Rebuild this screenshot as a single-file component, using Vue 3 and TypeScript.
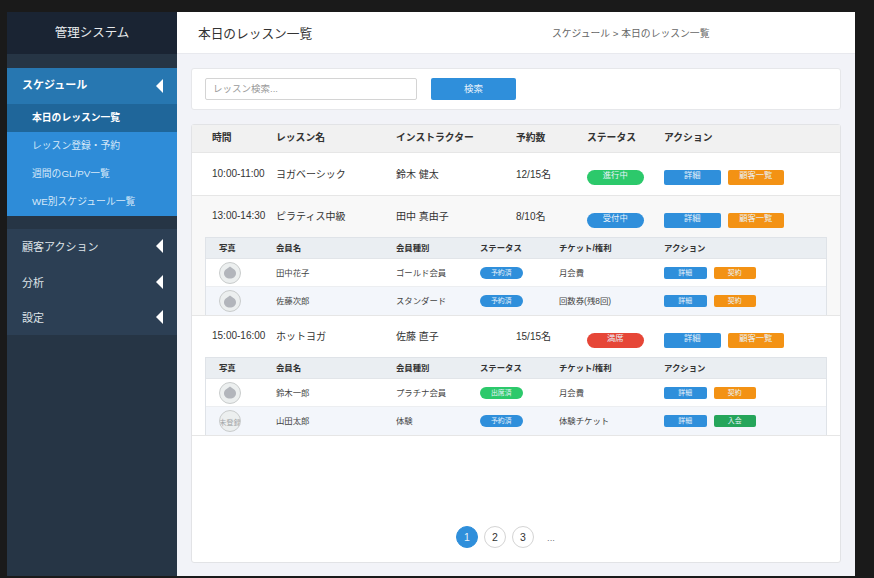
<script setup lang="ts">
interface Member {
  photo?: string;
  name: string;
  kind: string;
  status: string;
  statusType: string;
  ticket: string;
  action: string;
  actionType: string;
}

interface Lesson {
  time: string;
  name: string;
  teacher: string;
  booked: string;
  status: string;
  statusType: string;
  members: Member[];
}

const lessons: Lesson[] = [
  { time: '10:00-11:00', name: 'ヨガベーシック', teacher: '鈴木 健太', booked: '12/15名', status: '進行中', statusType: 'green', members: [] },
  {
    time: '13:00-14:30', name: 'ピラティス中級', teacher: '田中 真由子', booked: '8/10名', status: '受付中', statusType: 'blue',
    members: [
      { name: '田中花子', kind: 'ゴールド会員', status: '予約済', statusType: 'blue', ticket: '月会費', action: '契約', actionType: 'orange' },
      { name: '佐藤次郎', kind: 'スタンダード', status: '予約済', statusType: 'blue', ticket: '回数券(残8回)', action: '契約', actionType: 'orange' }
    ]
  },
  {
    time: '15:00-16:00', name: 'ホットヨガ', teacher: '佐藤 直子', booked: '15/15名', status: '満席', statusType: 'red',
    members: [
      { name: '鈴木一郎', kind: 'プラチナ会員', status: '出席済', statusType: 'green', ticket: '月会費', action: '契約', actionType: 'orange' },
      { photo: '未登録', name: '山田太郎', kind: '体験', status: '予約済', statusType: 'blue', ticket: '体験チケット', action: '入会', actionType: 'dark-green' }
    ]
  }
];

const subMenu = ['本日のレッスン一覧', 'レッスン登録・予約', '週間のGL/PV一覧', 'WE別スケジュール一覧'];
const otherMenu = ['顧客アクション', '分析', '設定'];
</script>

<template>
  <div class="frame">
    <aside class="sidebar">
      <div class="brand">管理システム</div>
      <nav class="nav">
        <div class="menu-item active">
          <span class="menu-label">スケジュール</span>
          <svg class="arrow" viewBox="0 0 7 14"><path d="M7 0V14L0 7Z" /></svg>
        </div>
        <ul class="sub-menu">
          <li v-for="(item, index) in subMenu" :key="item" :class="{ current: index === 0 }">{{ item }}</li>
        </ul>
        <div class="other-menu">
          <div v-for="item in otherMenu" :key="item" class="menu-item">
            <span>{{ item }}</span>
            <svg class="arrow" viewBox="0 0 7 14"><path d="M7 0V14L0 7Z" /></svg>
          </div>
        </div>
      </nav>
    </aside>

    <main class="main">
      <header class="topbar">
        <h1>本日のレッスン一覧</h1>
        <div class="crumb">スケジュール &gt; 本日のレッスン一覧</div>
      </header>

      <div class="content">
        <section class="search-card">
          <input class="search-input" type="text" placeholder="レッスン検索..." />
          <button class="search-btn" type="button">検索</button>
        </section>

        <section class="table-card">
          <div class="lesson-grid lesson-head">
            <span>時間</span>
            <span>レッスン名</span>
            <span>インストラクター</span>
            <span>予約数</span>
            <span>ステータス</span>
            <span>アクション</span>
          </div>

          <div v-for="lesson in lessons" :key="lesson.time" class="lesson" :class="{ tinted: lesson.statusType === 'blue' }">
            <div class="lesson-grid lesson-row" :class="{ solo: !lesson.members.length }">
              <span>{{ lesson.time }}</span>
              <span>{{ lesson.name }}</span>
              <span>{{ lesson.teacher }}</span>
              <span>{{ lesson.booked }}</span>
              <span class="low"><span class="tag pill big" :class="lesson.statusType">{{ lesson.status }}</span></span>
              <span class="low actions">
                <span class="tag big blue">詳細</span>
                <span class="tag big orange">顧客一覧</span>
              </span>
            </div>

            <div v-if="lesson.members.length" class="members">
              <div class="member-grid member-head">
                <span>写真</span>
                <span>会員名</span>
                <span>会員種別</span>
                <span>ステータス</span>
                <span>チケット/権利</span>
                <span>アクション</span>
              </div>
              <div v-for="member in lesson.members" :key="member.name" class="member-grid member-row">
                <span class="avatar">
                  <template v-if="member.photo">{{ member.photo }}</template>
                  <svg v-else viewBox="0 0 12 13"><path d="M6 .4C7.2 1.6 8.8 2.4 10.2 3.6 11.4 4.7 12 6 12 7.2 12 10.4 9.3 12.6 6 12.6S0 10.4 0 7.2C0 6 .6 4.7 1.8 3.6 3.2 2.4 4.8 1.6 6 .4Z" /></svg>
                </span>
                <span class="txt">{{ member.name }}</span>
                <span class="txt">{{ member.kind }}</span>
                <span class="actions"><span class="tag pill small" :class="member.statusType">{{ member.status }}</span></span>
                <span class="txt">{{ member.ticket }}</span>
                <span class="actions">
                  <span class="tag small blue">詳細</span>
                  <span class="tag small" :class="member.actionType">{{ member.action }}</span>
                </span>
              </div>
            </div>
          </div>

          <div class="pager">
            <span class="page on">1</span>
            <span class="page">2</span>
            <span class="page">3</span>
            <span class="dots">...</span>
          </div>
        </section>
      </div>
    </main>
  </div>
</template>

<style>
html,
body {
  margin: 0;
  background: #1a1a1a;
}
</style>

<style scoped>
.frame {
  display: flex;
  width: 848px;
  height: 564px;
  margin: 12px 0 2px 7px;
  font-family: 'Liberation Sans', 'Noto Sans CJK JP', sans-serif;
  color: #333;
  overflow: hidden;
}

.sidebar {
  width: 170px;
  flex: none;
  background: #263545;
  color: #fff;
}

.brand {
  height: 42px;
  line-height: 43px;
  text-align: center;
  font-size: 12.5px;
  color: #e6e9ec;
  background: #1a2433;
}

.nav {
  padding-top: 14px;
}

.menu-item {
  display: flex;
  align-items: center;
  justify-content: space-between;
  height: 35.5px;
  padding: 0 14px 0 15px;
  font-size: 11px;
  color: #dfe4e9;
}

.menu-item.active {
  font-weight: 700;
  color: #fff;
  background: #2777b1;
}

.menu-label {
  margin-bottom: 3px;
}

.arrow {
  width: 7px;
  height: 14px;
  fill: #fff;
}

.sub-menu {
  list-style: none;
  margin: 0 0 13px;
  padding: 0;
  background: #2e8cd8;
}

.sub-menu li {
  height: 28px;
  line-height: 28px;
  padding-left: 25px;
  font-size: 9.8px;
  color: #d7e9f8;
}

.sub-menu li.current {
  font-weight: 700;
  color: #fff;
  background: #1f669a;
}

.other-menu {
  background: #2c3f54;
}

.main {
  flex: 1;
  display: flex;
  flex-direction: column;
  min-width: 0;
  background: #f2f3f8;
}

.topbar {
  display: flex;
  align-items: center;
  height: 41px;
  padding-left: 21px;
  background: #fff;
  border-bottom: 1px solid #e8e9ee;
}

.topbar h1 {
  width: 354px;
  margin: 0;
  font-size: 12.7px;
  font-weight: 400;
  color: #333;
}

.crumb {
  font-size: 9.8px;
  color: #666;
}

.content {
  flex: 1;
  display: flex;
  flex-direction: column;
  gap: 14px;
  padding: 14px 14px 13px;
  min-height: 0;
}

.search-card {
  display: flex;
  align-items: center;
  gap: 14px;
  height: 42px;
  box-sizing: border-box;
  padding: 0 13px;
  background: #fff;
  border: 1px solid #e6e7ea;
  border-radius: 3px;
}

.search-input {
  width: 212px;
  height: 22px;
  box-sizing: border-box;
  padding: 0 7px 2px;
  font: 9.5px 'Liberation Sans', 'Noto Sans CJK JP', sans-serif;
  border: 1px solid #d4d4d4;
  border-radius: 2px;
  outline: none;
}

.search-input::placeholder {
  color: #9a9a9a;
}

.search-btn {
  width: 85px;
  height: 22px;
  padding: 0 0 2px;
  font: 9.5px 'Liberation Sans', 'Noto Sans CJK JP', sans-serif;
  color: #e6f1fa;
  background: #2f8fdb;
  border: 0;
  border-radius: 2px;
}

.table-card {
  flex: 1;
  display: flex;
  flex-direction: column;
  background: #fff;
  border: 1px solid #e2e3e6;
  border-radius: 3px;
}

.lesson-grid {
  display: grid;
  grid-template-columns: 64px 120px 120px 71px 77px 1fr;
  align-items: center;
  padding-left: 20px;
}

.lesson-head {
  height: 28px;
  box-sizing: border-box;
  padding-bottom: 3px;
  font-size: 9.8px;
  font-weight: 700;
  color: #333;
  background: #f1f1f1;
  border-bottom: 1px solid #e6e6e6;
}

.lesson {
  border-bottom: 1px solid #e6e6e6;
}

.lesson.tinted {
  background: #f8f8f8;
}

.lesson-row {
  height: 41px;
  box-sizing: border-box;
  padding-bottom: 2px;
  font-size: 10px;
  color: #333;
}

.lesson-row.solo {
  height: 42px;
}

.low {
  display: flex;
  padding-top: 9px;
}

.actions {
  display: flex;
  gap: 7px;
}

.tag {
  display: block;
  box-sizing: border-box;
  text-align: center;
  color: #e9f2fa;
  border-radius: 2px;
}

.tag.big {
  width: 56.5px;
  height: 15px;
  line-height: 11px;
  font-size: 8.3px;
}

.tag.small {
  width: 42.5px;
  height: 12px;
  line-height: 12px;
  font-size: 6.9px;
}

.tag.pill {
  border-radius: 8px;
}

.blue {
  background: #2f8fdb;
}

.green {
  background: #2cc96b;
}

.orange {
  background: #f39214;
}

.red {
  background: #e64637;
}

.dark-green {
  background: #25a55a;
}

.members {
  margin: 0 13px;
  border: 1px solid #dfe3e8;
  border-bottom: 0;
  font-size: 8.4px;
  color: #444;
}

.member-grid {
  display: grid;
  grid-template-columns: 57px 120px 84px 79px 105px 1fr;
  align-items: center;
  padding-left: 13px;
}

.member-head {
  height: 21px;
  box-sizing: border-box;
  padding-bottom: 2px;
  font-weight: 700;
  color: #333;
  background: #eaeef2;
  border-bottom: 1px solid #e2e5e9;
}

.member-row {
  height: 28px;
  box-sizing: border-box;
  background: #fff;
  border-bottom: 1px solid #eceef1;
}

.member-row:last-child {
  background: #f3f6fb;
  border-bottom: 0;
}

.txt {
  padding-bottom: 2px;
}

.avatar {
  display: flex;
  align-items: center;
  justify-content: center;
  width: 22px;
  height: 22px;
  box-sizing: border-box;
  overflow: hidden;
  font-size: 7.4px;
  white-space: nowrap;
  color: #a3a6a8;
  background: #ecefef;
  border: 1px solid #c9cccc;
  border-radius: 50%;
}

.avatar svg {
  width: 12px;
  height: 13px;
  fill: #b2b5bb;
}

.pager {
  display: flex;
  align-items: center;
  justify-content: center;
  gap: 6px;
  margin-top: auto;
  padding: 0 13px 14px 0;
}

.page {
  display: flex;
  align-items: center;
  justify-content: center;
  width: 22px;
  height: 22px;
  box-sizing: border-box;
  font-size: 10.5px;
  color: #333;
  border: 1px solid #d4d4d4;
  border-radius: 50%;
}

.page.on {
  color: #e9f2fa;
  background: #2f8fdb;
  border-color: #2f8fdb;
}

.dots {
  margin-left: 7px;
  width: 16px;
  font-size: 9.5px;
  color: #777;
}
</style>
